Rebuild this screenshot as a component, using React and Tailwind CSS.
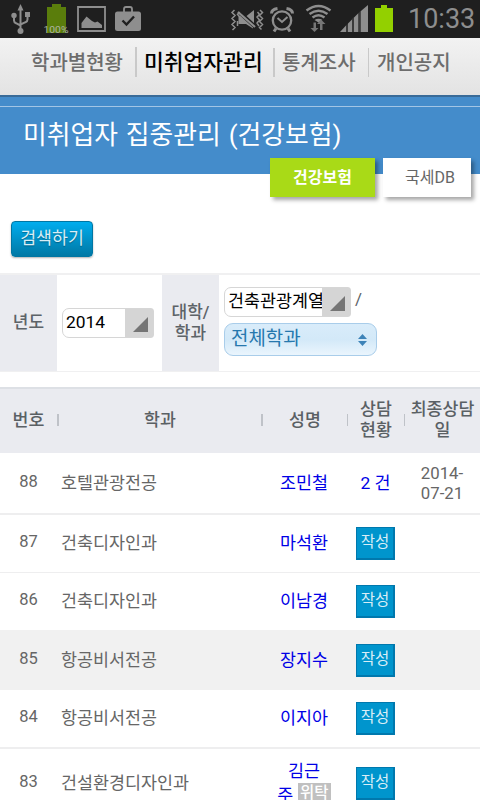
const rows = [
  { no: 88, dept: "호텔관광전공", name: "조민철", date: true, style: "h-[62px] border-b-2" },
  { no: 87, dept: "건축디자인과", name: "마석환", style: "h-[58px] border-b" },
  { no: 86, dept: "건축디자인과", name: "이남경", style: "h-[57px]" },
  { no: 85, dept: "항공비서전공", name: "장지수", style: "h-[60px] bg-[#f1f1f1]" },
  { no: 84, dept: "항공비서전공", name: "이지아", style: "h-[59px] border-b-2" },
  { no: 83, dept: "건설환경디자인과", name: "김근", style: "h-[68px]", tag: true },
];

function StatusBar() {
  return (
    <header className="flex h-[38px] shrink-0 bg-[#1f1f1f]">
      <svg width="400" height="38" viewBox="0 0 400 38" fill="#8e8e8e" className="shrink-0">
        {/* usb */}
        <path d="M20.500 10V32M14 16v4.500q0 2 2 2.700l4.500 2.300M27.500 16v3.500q0 2-2 2.700l-5 2.300" stroke="#8e8e8e" strokeWidth="2" fill="none" />
        <path d="M17.500 10.500l3-6.500 3 6.500z" />
        <circle cx="14" cy="15.500" r="2.700" />
        <path d="M25 12h5v5h-5z" />
        <circle cx="20.500" cy="31" r="3" />
        {/* charge */}
        <path d="M47 7h5V4h9v3h5v26H47z" fill="#5a7d0c" />
        <text x="43.500" y="32.500" fontSize="9.500" fontFamily="Roboto, sans-serif" fill="#b0b5a4" textLength="25" lengthAdjust="spacingAndGlyphs">
          100%
        </text>
        {/* picture */}
        <path d="M78 7h27v24H78z" fill="none" stroke="#8e8e8e" strokeWidth="1.800" />
        <path d="M81.500 28v-5l5-6.500 5.500 4.500 3 1.500 2.500-1 4.500 3.500v3z" />
        {/* briefcase */}
        <path d="M124 12V9q0-2 2-2h4q2 0 2 2v3" fill="none" stroke="#8e8e8e" strokeWidth="1.800" />
        <rect x="115" y="11.500" width="26" height="19.500" rx="2.500" />
        <path d="M122.500 20.500l4 4 7.500-8" fill="none" stroke="#1f1f1f" strokeWidth="2.400" />
        {/* vibrate / mute */}
        <path d="M234.500 10l-2.500 2.500 3 3-3 3 3 3-3 3 3 3-2.500 2.500M239.500 12l-2 2.500 2 2M237.500 26v-5M257.500 12l2 2.500-2.500 2.500 2.500 3-2.500 3 2 3M260 10l2.500 2.500-3 3 3 3-3 3 3 3-3 3 2 2" fill="none" stroke="#8e8e8e" strokeWidth="1.500" />
        <path d="M238 12l17 15" fill="none" stroke="#8e8e8e" strokeWidth="2.200" />
        <path d="M254 10v13l-7.500-7zM238.500 16h2L253 27.500v1l-7-4.500h-7.500z" />
        {/* alarm */}
        <g fill="none" stroke="#8e8e8e">
          <circle cx="282" cy="20.500" r="9.200" strokeWidth="2.300" />
          <path d="M277.500 18l4.500 4 5.500-5" strokeWidth="2" />
          <path d="M271.500 13.500q0-4 6-5M292.500 13.500q0-4-6-5" strokeWidth="3" />
          <path d="M276 28.500l-2 3M288 28.500l2 3" strokeWidth="3" />
        </g>
        {/* wifi */}
        <path d="M306.500 10.500q12-9 24 0M309.500 14q9-6.500 18 0M312.500 17.500q6-4.500 12 0" fill="none" stroke="#8e8e8e" strokeWidth="2.400" />
        <path d="M314.500 20q4-2.500 8 0l-4 2.500z" />
        <path d="M313.500 22.500h2.500v5.500h2.500l-4 4-4-4h3zM320 30v-6h-3l4-4.500 4.500 4.500h-3v6z" fill="#767676" />
        {/* signal */}
        <path d="M340 32l6-6.500V32zM348 23.500l4-4V32h-4zM354 17.500l4.500-4.500v19H354zM360.500 11.500l1-1L368 5v27h-7.500z" />
        <path d="M346 25.500l2-2V32h-2zM352 19l2-2v15h-2zM358.500 13l2-2v21h-2z" fill="#3a3a3a" />
        <path d="M375 8h6V5h6v3h6v24h-18z" fill="#93d000" />
      </svg>
      <span className="ml-[8px] text-[27px] leading-[38px] whitespace-nowrap text-[#8e8e8e]">10:33</span>
    </header>
  );
}

function Nav() {
  return (
    <nav className="flex h-[57px] shrink-0 bg-gradient-to-b from-[#f2f2f2] to-[#e3e3e3] text-[20px] leading-[50px] font-medium whitespace-nowrap text-[#6d6d6d]">
      <span className="w-[135px] pl-[31px]">학과별현황</span>
      <i className="mt-[9px] h-[30px] w-[2px] bg-[#c9c9c9]" />
      <span className="w-[136px] pl-[7px] text-[21.500px] text-black">미취업자관리</span>
      <i className="mt-[10px] h-[29px] w-[2px] bg-[#c9c9c9]" />
      <span className="w-[93px] pl-[7px]">통계조사</span>
      <i className="mt-[10px] h-[29px] w-px bg-[#c9c9c9]" />
      <span className="pl-[8px]">개인공지</span>
    </nav>
  );
}

function Select({ value, width }) {
  return (
    <div className={`flex h-[30px] ${width} rounded-l-[7px] rounded-r-[3px] border border-[#d6d6d6] bg-white text-[17.400px] leading-[27px] text-black`}>
      <span className="min-w-0 flex-1 pl-[3px] whitespace-nowrap">{value}</span>
      <span className="flex w-[28px] shrink-0 items-end justify-end bg-[#d5d5d5] pr-[5px] pb-[5px]">
        <svg width="15" height="15">
          <path d="M0 15L15 0v15z" fill="#757575" />
        </svg>
      </span>
    </div>
  );
}

function Filters() {
  return (
    <div className="mt-[16px] flex h-[99px] shrink-0 border-t-2 border-b border-[#f0f0f1] text-[17px] leading-[21px] text-[#5d6368]">
      <div className="flex w-[57px] items-center justify-center bg-[#eaebf0] pb-[2px] font-medium">년도</div>
      <div className="flex w-[105px] items-center pl-[5px]">
        <Select value="2014" width="w-[92px]" />
      </div>
      <div className="flex w-[57px] items-center justify-center bg-[#eaebf0] text-center font-medium">
        대학/
        <br />
        학과
      </div>
      <div className="flex-1 pt-[12px] pl-[5px]">
        <div className="flex">
          <Select value="건축관광계열" width="w-[127px]" />
          <span className="pt-[2px] pl-[4px]">/</span>
        </div>
        <div className="mt-[6px] flex h-[33px] w-[153px] justify-between rounded-[9px] border border-[#a9cdea] bg-gradient-to-b from-[#d9ecfa] via-[#d3e9f8] to-[#eaf5fd] pr-[9px] pl-[6px] text-[18.900px] leading-[29px] text-[#2678ae]">
          전체학과
          <svg width="9" height="12" className="mt-[10px]" fill="#3d83b8">
            <path d="M0 5l4.500-5L9 5zM0 7h9l-4.500 5z" />
          </svg>
        </div>
      </div>
    </div>
  );
}

function Th({ width, children, bar }) {
  return (
    <div className={`flex ${width} items-center`}>
      <i className={`h-[12px] shrink-0 ${bar}`} />
      <span className="flex-1 text-center">{children}</span>
    </div>
  );
}

function Table() {
  return (
    <section className="mt-[15px] shrink-0">
      <div className="flex h-[66px] border-t-2 border-[#dde0e5] bg-[#eaebf0] pb-[2px] text-[17.300px] leading-[21px] font-medium text-[#5a6064]">
        <Th width="w-[57px]" bar="w-0">번호</Th>
        <Th width="w-[204px]" bar="w-[2px] bg-[#bfc2c8]">학과</Th>
        <Th width="w-[86px]" bar="w-[2px] bg-[#bfc2c8]">성명</Th>
        <Th width="w-[57px]" bar="w-px bg-[#bfc2c8]">
          상담
          <br />
          현황
        </Th>
        <Th width="w-[76px]" bar="w-px bg-[#bfc2c8]">
          최종상담
          <br />일
        </Th>
      </div>
      {rows.map((row) => (
        <div
          key={row.no}
          className={`flex items-center border-[#eeeeef] text-[17.400px] leading-[20px] whitespace-nowrap text-[#666] ${row.style}`}
        >
          <span className="w-[57px] pb-[3px] text-center text-[16.500px]">{row.no}</span>
          <span className="w-[204px] pb-px pl-[4px]">{row.dept}</span>
          <span className="w-[86px] pb-px text-center leading-[24px] text-[#0000e6]">
            {row.name}
            {row.tag && (
              <>
                <br />주 <b className="inline-block h-[20px] w-[33px] bg-[#c0c0c0] align-top text-[15.500px] leading-[20px] font-medium text-white">위탁</b>
              </>
            )}
          </span>
          <span className="flex w-[57px] justify-center text-[#0000e6]">
            {row.date ? (
              "2 건"
            ) : (
              <span className="h-[33px] w-[39px] border border-r-2 border-b-2 border-[#0078ad] bg-[#0095cd] text-center text-[15.500px] leading-[28px] text-[#d9eef7]">
                작성
              </span>
            )}
          </span>
          <span className="w-[76px] text-center text-[16.800px]">
            {row.date && (
              <>
                2014-
                <br />
                07-21
              </>
            )}
          </span>
        </div>
      ))}
    </section>
  );
}

export default function App() {
  return (
    <div lang="ko" className="flex h-[800px] w-[480px] flex-col overflow-hidden bg-white font-[Roboto,'Noto_Sans_CJK_KR',sans-serif]">
      <StatusBar />
      <Nav />
      <div className="h-[79px] shrink-0 border-t-2 border-[#396b98] bg-[#448ccb]">
        <div className="mt-[9px] border-t border-[#a2c5e5] pl-[23px] text-[25.800px] leading-[56px] [word-spacing:1.5px] whitespace-nowrap text-white">
          미취업자 집중관리 (건강보험)
        </div>
      </div>
      <div className="relative -mt-[16px] flex h-[39px] shrink-0 justify-end gap-[8px] pr-[9px] text-[16px] leading-[39px]">
        <span className="w-[105px] bg-[#a9da17] text-center font-bold text-white shadow-[3px_3px_4px_rgba(0,0,0,0.35)]">건강보험</span>
        <span className="w-[88px] bg-white pl-[22px] text-[#666] shadow-[3px_3px_4px_rgba(0,0,0,0.35)]">국세DB</span>
      </div>
      <button className="mt-[24px] ml-[11px] h-[36px] w-[82px] shrink-0 rounded-[4px] border border-[#0076a3] bg-gradient-to-b from-[#00adee] to-[#0078a5] pb-[2px] text-[17.300px] leading-[31px] text-[#d9eef7] shadow-[0_1px_2px_rgba(0,0,0,0.3)] [text-shadow:0_1px_1px_rgba(0,0,0,0.3)]">
        검색하기
      </button>
      <Filters />
      <Table />
    </div>
  );
}
